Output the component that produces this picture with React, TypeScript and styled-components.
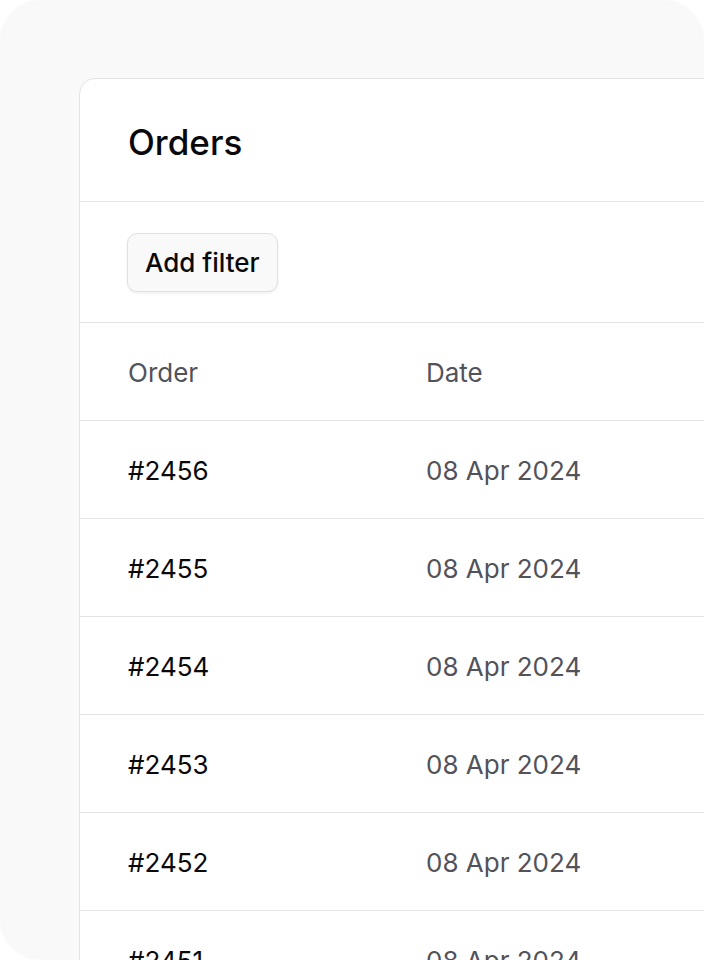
import * as React from "react";
import styled, { createGlobalStyle } from "styled-components";

const GlobalStyle = createGlobalStyle`
  html, body {
    margin: 0;
    padding: 0;
    background: #ffffff;
  }
  body {
    font-family: Inter, "Noto Sans", sans-serif;
    -webkit-font-smoothing: antialiased;
  }
`;

const Frame = styled.div`
  width: 704px;
  height: 960px;
  box-sizing: border-box;
  border-radius: 40px;
  background: #f9f9f9;
  overflow: hidden;
  padding: 78px 0 0 79px;
`;

const Card = styled.div`
  width: 760px;
  background: #ffffff;
  border: 1px solid #e4e4e7;
  border-radius: 16px;
`;

const CardHeader = styled.div`
  padding: 42px 48px 38px;
  border-bottom: 1px solid #e4e4e7;
`;

const Title = styled.h1`
  margin: 0;
  font-size: 35px;
  line-height: 42px;
  font-weight: 500;
  color: #09090b;
`;

const Toolbar = styled.div`
  padding: 31px 48px 30px 47px;
  border-bottom: 1px solid #e4e4e7;
`;

const Button = styled.button`
  height: 59px;
  padding: 0 17px;
  font-family: inherit;
  font-size: 26px;
  font-weight: 500;
  color: #09090b;
  background: #f9f9f9;
  border: 1px solid #e0e0e3;
  border-radius: 10px;
  box-shadow: 0 2px 3px rgba(0, 0, 0, 0.06);
`;

const Row = styled.div`
  display: grid;
  grid-template-columns: 298px 1fr;
  align-items: center;
  height: 98px;
  padding: 2px 48px 0;
  box-sizing: border-box;
  border-bottom: 1px solid #e4e4e7;
`;

const Cell = styled.div<{ $muted?: boolean }>`
  font-size: 26px;
  line-height: 32px;
  color: ${(p) => (p.$muted ? "#52525b" : "#09090b")};
`;

const orders = [2456, 2455, 2454, 2453, 2452, 2451, 2450];

export default function App() {
  return (
    <>
      <GlobalStyle />
      <Frame>
        <Card>
          <CardHeader>
            <Title>Orders</Title>
          </CardHeader>
          <Toolbar>
            <Button>Add filter</Button>
          </Toolbar>
          <Row>
            <Cell $muted>Order</Cell>
            <Cell $muted>Date</Cell>
          </Row>
          {orders.map((id) => (
            <Row key={id}>
              <Cell>#{id}</Cell>
              <Cell $muted>08 Apr 2024</Cell>
            </Row>
          ))}
        </Card>
      </Frame>
    </>
  );
}
